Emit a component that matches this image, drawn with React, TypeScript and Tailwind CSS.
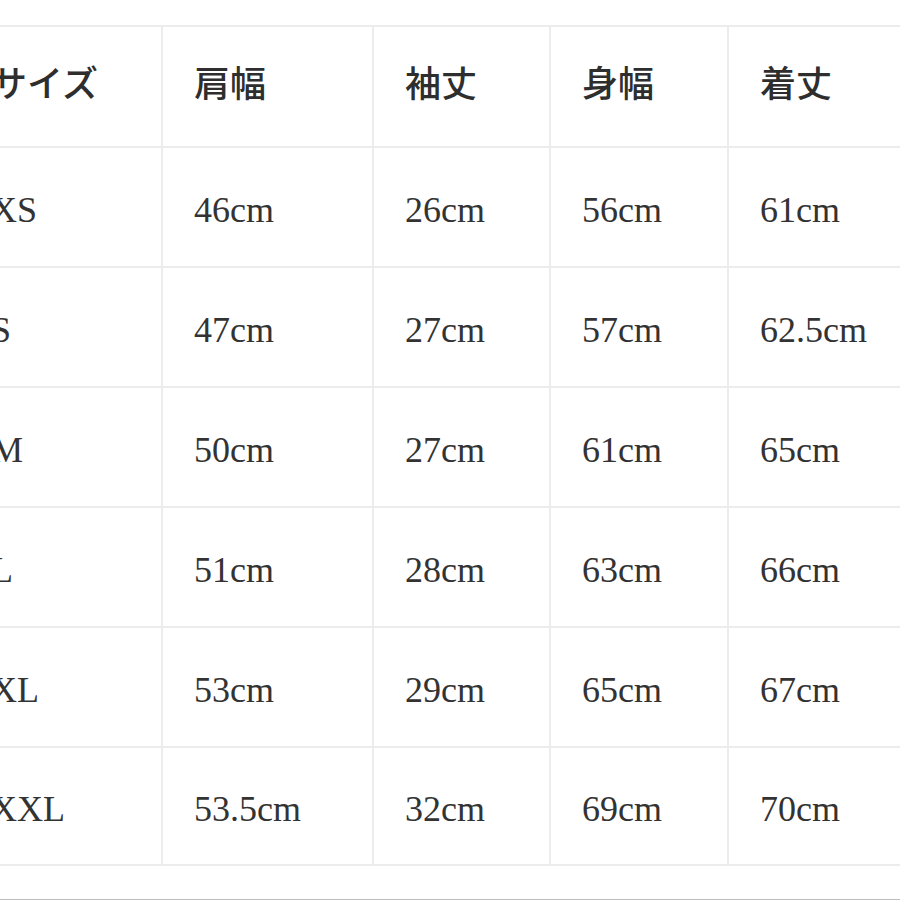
import React from 'react';

const headers = ['サイズ', '肩幅', '袖丈', '身幅', '着丈', ''];

const rows: string[][] = [
  ['XS', '46cm', '26cm', '56cm', '61cm', ''],
  ['S', '47cm', '27cm', '57cm', '62.5cm', ''],
  ['M', '50cm', '27cm', '61cm', '65cm', ''],
  ['L', '51cm', '28cm', '63cm', '66cm', ''],
  ['XL', '53cm', '29cm', '65cm', '67cm', ''],
  ['XXL', '53.5cm', '32cm', '69cm', '70cm', ''],
];

const serif = { fontFamily: '"Liberation Serif", "Noto Sans CJK JP", serif' };

export default function App() {
  return (
    <div className="w-[900px] h-[900px] bg-white overflow-hidden flex flex-col" style={serif}>
      <div className="pt-[25px]">
        {/* size table, shifted left so the first column is cut off like the screenshot */}
        <div className="-ml-[40px] w-[1000px] grid grid-cols-[201px_209px_175px_176px_200px_1fr] gap-[2px] bg-[#ececec] border-y-2 border-[#ececec]">
          {headers.map((h, i) => (
            <div key={'h' + i} className="bg-white h-[119px] flex items-center pl-[31px] pb-[4px]">
              <span className="text-[36px] font-medium text-[#2e2e2e] leading-none">{h}</span>
            </div>
          ))}
          {rows.map((row, r) =>
            row.map((cell, c) => (
              <div
                key={r + '-' + c}
                className={
                  r === 5
                    ? 'bg-white h-[116px] flex items-center pl-[31px] pt-[6px]'
                    : 'bg-white h-[118px] flex items-center pl-[31px] pt-[6px]'
                }
              >
                <span className="text-[36px] text-[#333333]">{cell}</span>
              </div>
            ))
          )}
        </div>
      </div>
      <div className="mt-auto h-px bg-[#bdbdbd]" />
    </div>
  );
}
